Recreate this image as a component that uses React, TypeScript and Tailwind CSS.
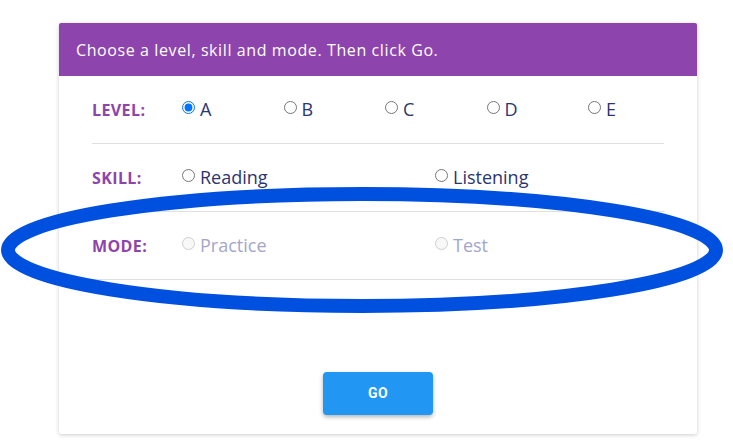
import React from 'react';

const levels = ['A', 'B', 'C', 'D', 'E'];

function Label({ children }: { children: React.ReactNode }) {
  return <div className="w-[90px] shrink-0 text-[16px] font-bold text-[#8e44ad] tracking-[0.4px]">{children}</div>;
}

function Option({ label, checked, disabled, width }: { label: string; checked?: boolean; disabled?: boolean; width: string }) {
  return (
    <label className={`flex shrink-0 items-center ${width}`}>
      <input
        type="radio"
        defaultChecked={checked}
        disabled={disabled}
        className="w-[13px] h-[13px] m-0 mt-[-5px] mr-[5px]"
      />
      <span className={`text-[18px] ${disabled ? 'text-[#a3a6c9]' : 'text-[#2b3570]'}`}>{label}</span>
    </label>
  );
}

export default function App() {
  return (
    <div className="relative w-[733px] h-[445px] bg-white overflow-hidden" style={{ fontFamily: '"Trebuchet MS", "Open Sans", sans-serif' }}>
      <div className="absolute left-[59px] top-[23px] w-[638px] h-[411px] bg-white rounded-[2px] shadow-[0_1px_4px_rgba(0,0,0,0.2)] flex flex-col">
        <div className="h-[53px] bg-[#8e44ad] rounded-t-[2px] flex items-center px-[17px] text-white text-[16px] tracking-[0.6px]">
          Choose a level, skill and mode. Then click Go.
        </div>
        <div className="px-[33px] flex flex-col">
          <div className="h-[68px] border-b border-[#e0e0e0] flex items-center">
            <Label>LEVEL:</Label>
            {levels.map((l, i) => (
              <Option key={l} label={l} checked={i === 0} width="w-[101.5px]" />
            ))}
          </div>
          <div className="h-[68px] border-b border-[#e0e0e0] flex items-center">
            <Label>SKILL:</Label>
            <Option label="Reading" width="w-[253px]" />
            <Option label="Listening" width="w-[200px]" />
          </div>
          <div className="h-[68px] border-b border-[#e0e0e0] flex items-center">
            <Label>MODE:</Label>
            <Option label="Practice" disabled width="w-[253px]" />
            <Option label="Test" disabled width="w-[200px]" />
          </div>
        </div>
        <div className="flex justify-center mt-[92px]">
          <button className="w-[110px] h-[43px] bg-[#2196f3] rounded-[4px] text-white text-[14px] font-bold tracking-[0.5px] shadow-[0_2px_4px_rgba(0,0,0,0.3)]" style={{ fontFamily: 'Roboto, "Liberation Sans", sans-serif' }}>
            GO
          </button>
        </div>
      </div>
      <svg className="absolute left-0 top-0 pointer-events-none" width="733" height="445" viewBox="0 0 733 445">
        <ellipse cx="362" cy="250" rx="354" ry="56" fill="none" stroke="#0050e0" strokeWidth="14" />
      </svg>
    </div>
  );
}
